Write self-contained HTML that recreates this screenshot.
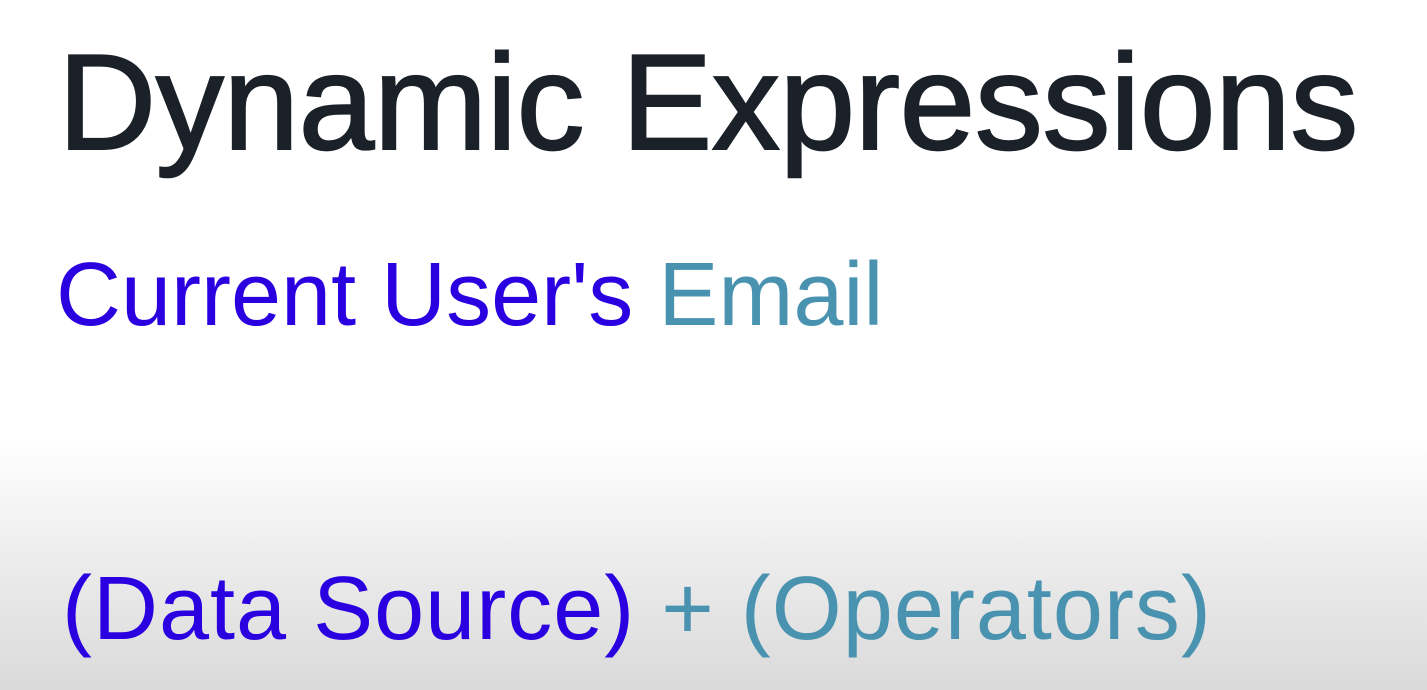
<!DOCTYPE html>
<html><head><style>
html,body{margin:0;padding:0}
body{width:1427px;height:690px;overflow:hidden;position:relative;font-family:"Liberation Sans",sans-serif;
background:linear-gradient(to bottom,#fff 0,#fff 440px,#ececec 560px,#dadada 690px);}
.t{position:absolute;white-space:nowrap;line-height:1}
#h{left:58px;top:34px;font-size:136px;font-weight:normal;color:#1b2128;letter-spacing:-0.4px;-webkit-text-stroke:2px #1b2128}
#a{left:56px;top:250px;font-size:90px;color:#2a00e0;letter-spacing:0px}
#b{left:62px;top:564px;font-size:90px;color:#2a00e0;letter-spacing:1px}
.c{color:#4a93b0}
</style></head><body>
<div class="t" id="h">Dynamic Expressions</div>
<div class="t" id="a">Current User's <span class="c">Email</span></div>
<div class="t" id="b">(Data Source)<span class="c"> + (Operators)</span></div>
</body></html>
